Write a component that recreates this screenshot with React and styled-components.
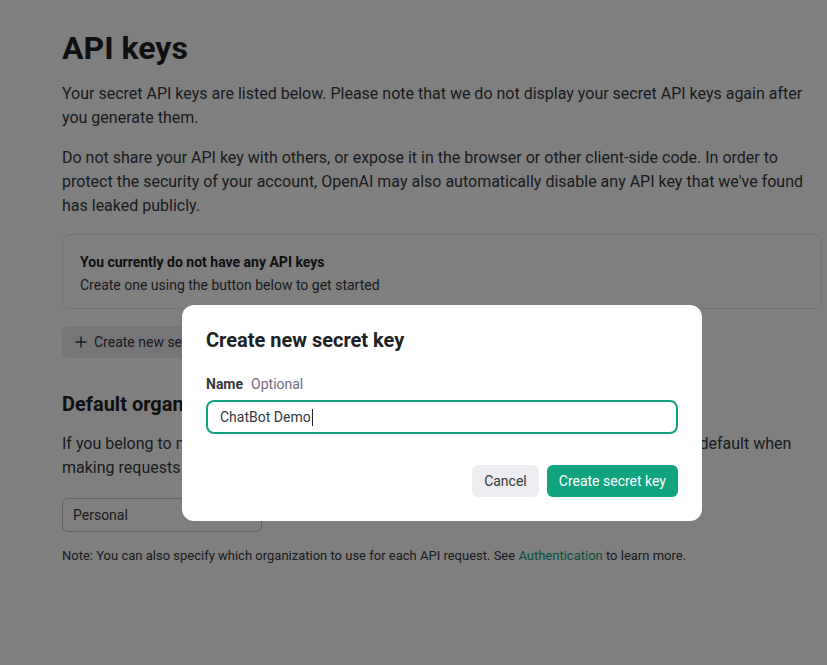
import React from "react";
import styled, { createGlobalStyle } from "styled-components";

const Global = createGlobalStyle`
  html, body { margin: 0; padding: 0; background: #ffffff; }
  body { font-family: Roboto, "Liberation Sans", Arial, sans-serif; color: #353740; -webkit-font-smoothing: antialiased; }
  * { box-sizing: border-box; }
`;

const Page = styled.main`
  width: 827px;
  min-height: 665px;
  padding: 28px 0 40px 62px;
`;

const Column = styled.div`
  width: 760px;
  display: flex;
  flex-direction: column;
`;

const Title = styled.h1`
  margin: 0;
  font-size: 32px;
  line-height: 40px;
  font-weight: 700;
  color: #202123;
`;

const Para = styled.p`
  margin: ${(p) => p.$top || 0}px 0 0;
  font-size: 16px;
  line-height: 24px;
  color: #353740;
`;

const EmptyCard = styled.div`
  margin-top: 16px;
  border: 1px solid #e5e5ea;
  border-radius: 8px;
  padding: 15px 17px 12px;
  display: flex;
  flex-direction: column;
`;

const CardTitle = styled.div`
  font-size: 14px;
  line-height: 24px;
  font-weight: 700;
  color: #202123;
`;

const CardText = styled.div`
  font-size: 14px;
  line-height: 22px;
  color: #353740;
`;

const SoftButton = styled.button`
  align-self: flex-start;
  margin-top: 17px;
  height: 32px;
  padding: 0 12px;
  display: inline-flex;
  align-items: center;
  gap: 6px;
  border: none;
  border-radius: 6px;
  background: #ececf1;
  color: #353740;
  font-family: inherit;
  font-size: 14px;
`;

const SectionTitle = styled.h2`
  margin: 32px 0 0;
  font-size: 20px;
  line-height: 28px;
  font-weight: 700;
  color: #202123;
`;

const SelectBox = styled.div`
  margin-top: 18px;
  width: 200px;
  height: 34px;
  border: 1px solid #c5c5d2;
  border-radius: 6px;
  padding: 0 10px;
  display: flex;
  align-items: center;
  font-size: 14px;
  color: #353740;
`;

const Note = styled.p`
  margin: 16px 0 0;
  font-size: 13px;
  line-height: 16px;
  color: #353740;
`;

const Link = styled.a`
  color: #10a37f;
  text-decoration: none;
`;

const Overlay = styled.div`
  position: fixed;
  inset: 0;
  background: rgba(0, 0, 0, 0.5);
`;

const Dialog = styled.div`
  position: absolute;
  left: 182px;
  top: 305px;
  width: 520px;
  background: #ffffff;
  border-radius: 12px;
  padding: 24px;
  display: flex;
  flex-direction: column;
`;

const DialogTitle = styled.h3`
  margin: 0;
  font-size: 20px;
  line-height: 22px;
  font-weight: 700;
  color: #202123;
`;

const Label = styled.div`
  margin-top: 23px;
  display: flex;
  gap: 8px;
  font-size: 14px;
  line-height: 20px;
`;

const LabelStrong = styled.span`
  font-weight: 700;
  color: #353740;
`;

const LabelHint = styled.span`
  color: #6e6e80;
`;

const Input = styled.div`
  margin-top: 6px;
  height: 34px;
  border: 2px solid #10a37f;
  border-radius: 8px;
  padding: 0 12px;
  display: flex;
  align-items: center;
  font-size: 14px;
  color: #353740;
`;

const Caret = styled.span`
  display: inline-block;
  width: 1px;
  height: 17px;
  background: #202123;
  margin-left: 1px;
`;

const Actions = styled.div`
  margin-top: 31px;
  display: flex;
  justify-content: flex-end;
  gap: 8px;
`;

const Btn = styled.button`
  height: 32px;
  padding: 0 12px;
  border: none;
  border-radius: 6px;
  font-family: inherit;
  font-size: 14px;
  background: ${(p) => (p.$primary ? "#10a37f" : "#ececf1")};
  color: ${(p) => (p.$primary ? "#ffffff" : "#353740")};
`;

const Plus = () => (
  <svg width="14" height="14" viewBox="0 0 14 14" fill="none" stroke="currentColor" strokeWidth="1.4" strokeLinecap="round">
    <path d="M7 2v10M2 7h10" />
  </svg>
);

export default function App() {
  return (
    <>
      <Global />
      <Page>
        <Column>
          <Title>API keys</Title>
          <Para $top={14}>
            Your secret API keys are listed below. Please note that we do not display your secret API keys again after
            you generate them.
          </Para>
          <Para $top={16}>
            Do not share your API key with others, or expose it in the browser or other client-side code. In order to
            protect the security of your account, OpenAI may also automatically disable any API key that we've found
            has leaked publicly.
          </Para>
          <EmptyCard>
            <CardTitle>You currently do not have any API keys</CardTitle>
            <CardText>Create one using the button below to get started</CardText>
          </EmptyCard>
          <SoftButton>
            <Plus />
            Create new secret key
          </SoftButton>
          <SectionTitle>Default organization</SectionTitle>
          <Para $top={14}>
            If you belong to multiple organizations, this setting controls which organization is used by default when
            making requests with the API keys above.
          </Para>
          <SelectBox>Personal</SelectBox>
          <Note>
            Note: You can also specify which organization to use for each API request. See <Link>Authentication</Link> to
            learn more.
          </Note>
        </Column>
      </Page>
      <Overlay>
        <Dialog>
          <DialogTitle>Create new secret key</DialogTitle>
          <Label>
            <LabelStrong>Name</LabelStrong>
            <LabelHint>Optional</LabelHint>
          </Label>
          <Input>
            ChatBot Demo
            <Caret />
          </Input>
          <Actions>
            <Btn>Cancel</Btn>
            <Btn $primary>Create secret key</Btn>
          </Actions>
        </Dialog>
      </Overlay>
    </>
  );
}
